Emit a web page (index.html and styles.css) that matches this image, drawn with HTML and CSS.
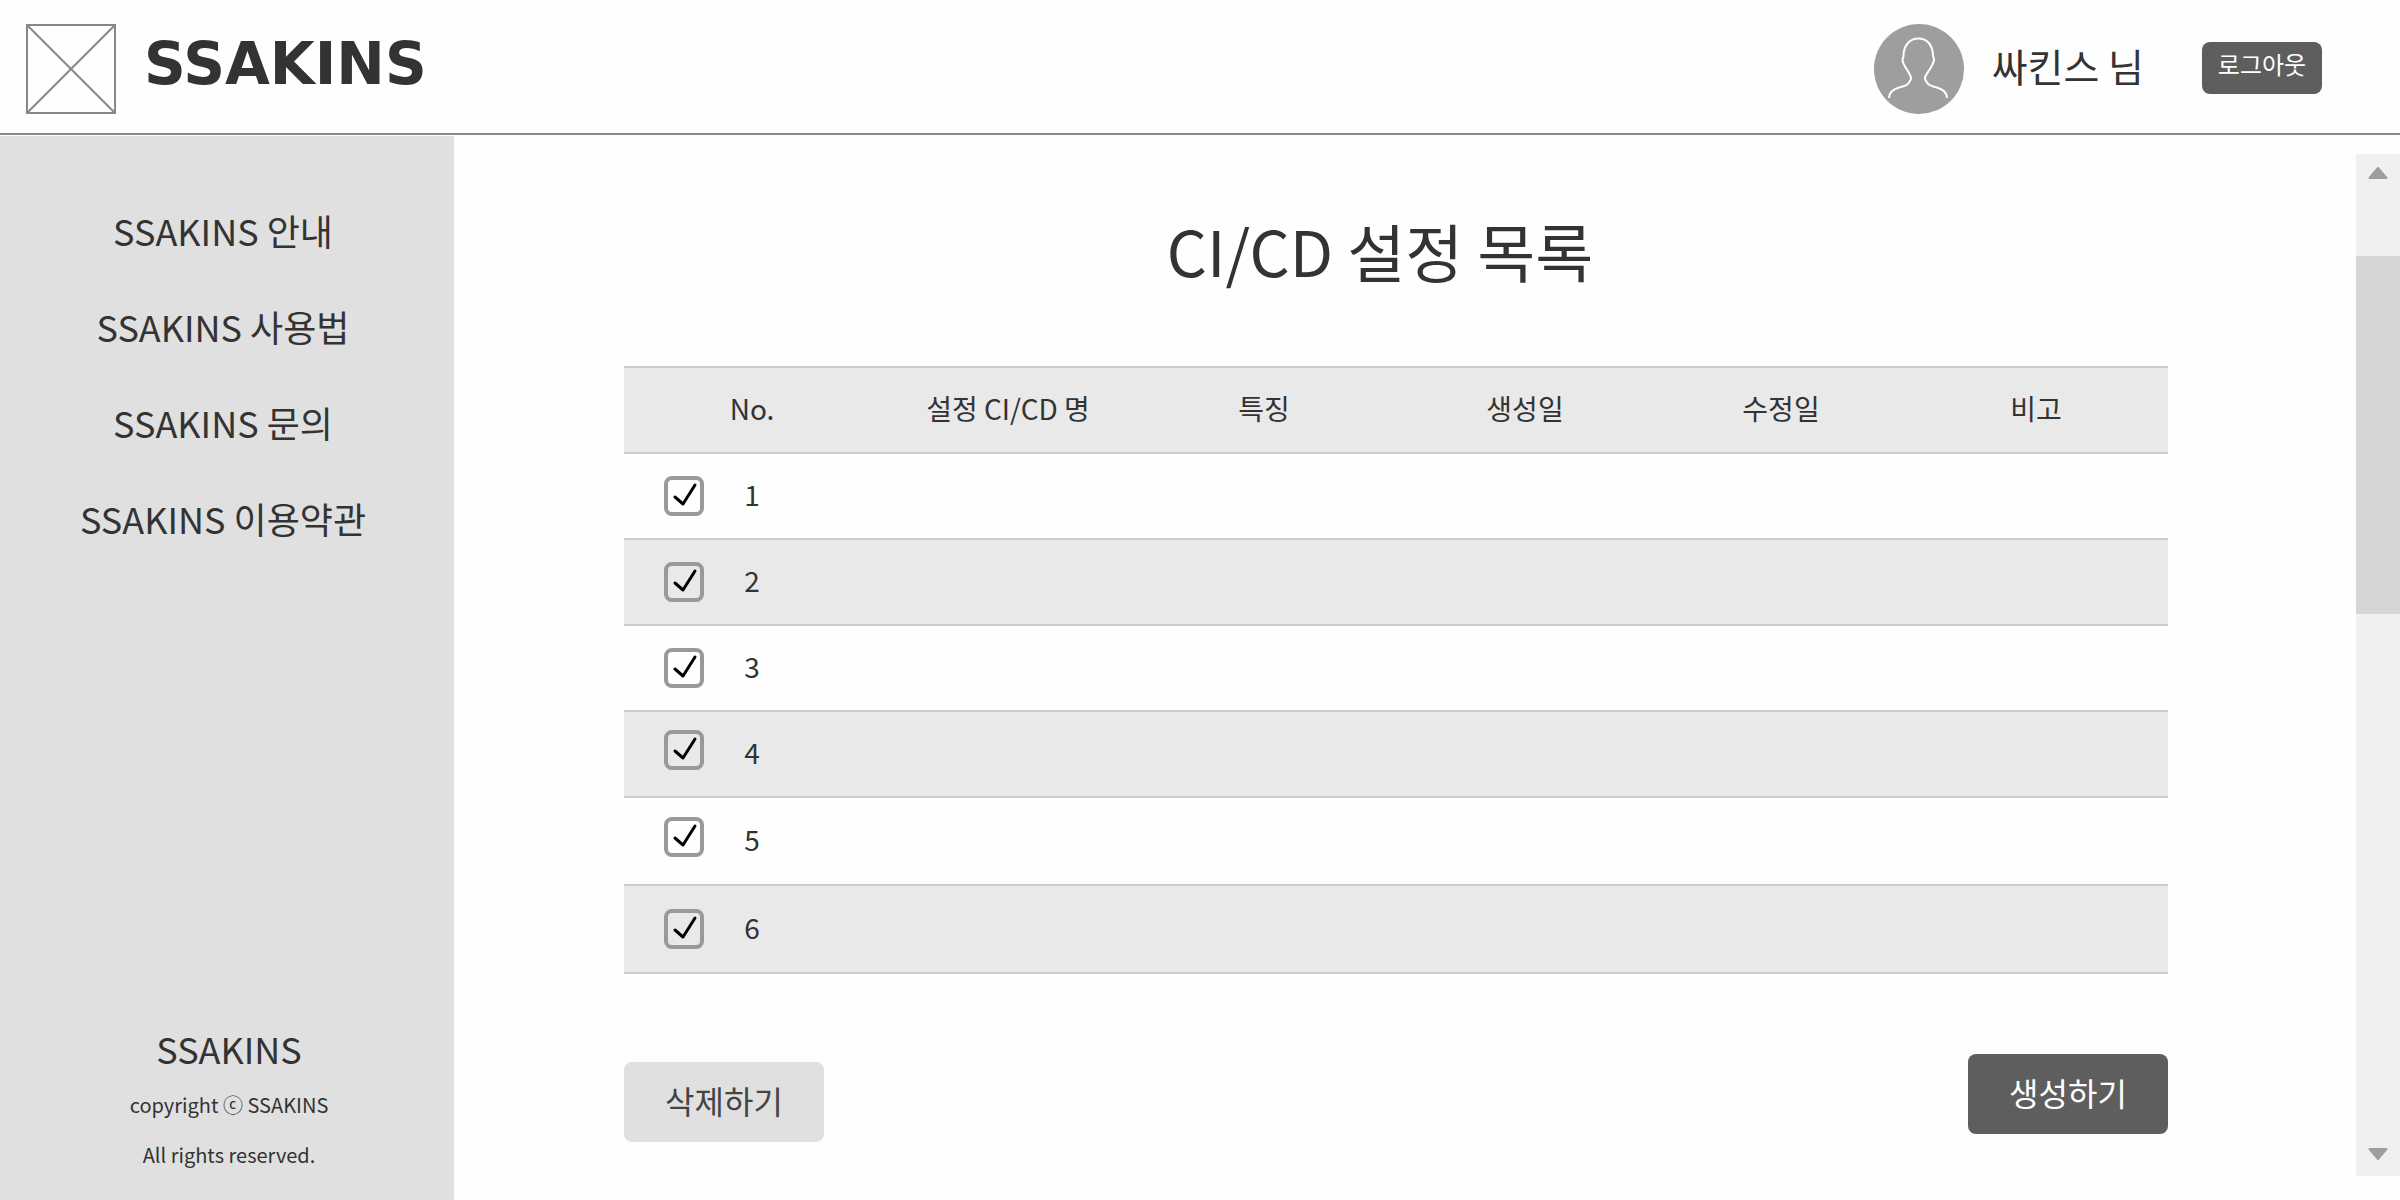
FILE: index.html
```html
<!DOCTYPE html>
<html>
<head>
<meta charset="utf-8">
<meta name="viewport" content="width=device-width, initial-scale=1">
<title>SSAKINS - CI/CD 설정 목록</title>
<link rel="stylesheet" href="styles.css">
</head>
<body>
<header class="topbar">
  <a class="brand" href="#">
    <svg class="brand-mark" viewBox="0 0 90 90" aria-hidden="true"><path d="M1 1H89V89H1ZM1 1L89 89M89 1L1 89"/></svg>
    <span class="brand-name">SSAKINS</span>
  </a>
  <div class="account">
    <svg class="avatar" viewBox="0 0 90 90" aria-hidden="true">
      <circle cx="45" cy="45" r="45"/>
      <path d="M15 74C15 68 20 65 25 63.500C30 62 33 62 35 58.500C36.500 56.500 38 55 36.500 52C33 45 29 41 28.500 36C28.500 34 29.500 34 29.500 31C30 21 36 14.500 44.500 14.500C53 14.500 58.500 21 59 31C59 34 60.500 34 60 36C59 42 55 46 51.500 52C50 55 51.500 56.500 53 58.500C55 62 58 62 63 63.500C68 65 73 68 73 74"/>
    </svg>
    <span class="user-name">싸킨스 님</span>
    <button class="logout" type="button">로그아웃</button>
  </div>
</header>
<div class="layout">
  <aside class="sidebar">
    <nav class="menu">
      <a href="#">SSAKINS 안내</a>
      <a href="#">SSAKINS 사용법</a>
      <a href="#">SSAKINS 문의</a>
      <a href="#">SSAKINS 이용약관</a>
    </nav>
    <footer class="legal">
      <p class="legal-name">SSAKINS</p>
      <p class="legal-line">copyright ⓒ SSAKINS</p>
      <p class="legal-line">All rights reserved.</p>
    </footer>
  </aside>
  <main class="content">
    <h1 class="title">CI/CD 설정 목록</h1>
    <table class="list">
      <colgroup>
        <col class="col-check"><col class="col-no"><col class="col-name"><col class="col-feature"><col class="col-created"><col class="col-updated"><col class="col-note">
      </colgroup>
      <thead>
        <tr><th></th><th class="no">No.</th><th>설정 CI/CD 명</th><th>특징</th><th>생성일</th><th>수정일</th><th>비고</th></tr>
      </thead>
      <tbody>
        <tr><td class="pick"><label class="check"><input type="checkbox" aria-label="1" checked><svg viewBox="0 0 40 40" aria-hidden="true"><path d="M11 21L19 28L31 9"/></svg></label></td><td class="no">1</td><td></td><td></td><td></td><td></td><td></td></tr>
        <tr><td class="pick"><label class="check"><input type="checkbox" aria-label="2" checked><svg viewBox="0 0 40 40" aria-hidden="true"><path d="M11 21L19 28L31 9"/></svg></label></td><td class="no">2</td><td></td><td></td><td></td><td></td><td></td></tr>
        <tr><td class="pick"><label class="check"><input type="checkbox" aria-label="3" checked><svg viewBox="0 0 40 40" aria-hidden="true"><path d="M11 21L19 28L31 9"/></svg></label></td><td class="no">3</td><td></td><td></td><td></td><td></td><td></td></tr>
        <tr><td class="pick pick-high"><label class="check"><input type="checkbox" aria-label="4" checked><svg viewBox="0 0 40 40" aria-hidden="true"><path d="M11 21L19 28L31 9"/></svg></label></td><td class="no">4</td><td></td><td></td><td></td><td></td><td></td></tr>
        <tr class="tall"><td class="pick pick-high"><label class="check"><input type="checkbox" aria-label="5" checked><svg viewBox="0 0 40 40" aria-hidden="true"><path d="M11 21L19 28L31 9"/></svg></label></td><td class="no">5</td><td></td><td></td><td></td><td></td><td></td></tr>
        <tr class="tall"><td class="pick"><label class="check"><input type="checkbox" aria-label="6" checked><svg viewBox="0 0 40 40" aria-hidden="true"><path d="M11 21L19 28L31 9"/></svg></label></td><td class="no">6</td><td></td><td></td><td></td><td></td><td></td></tr>
      </tbody>
    </table>
    <div class="actions">
      <button class="action action-delete" type="button">삭제하기</button>
      <button class="action action-create" type="button">생성하기</button>
    </div>
  </main>
  <div class="scroll">
    <button class="scroll-up" type="button" aria-label="위로"><svg class="arrow" viewBox="0 0 20 14" aria-hidden="true"><path d="M10 2L18.500 12H1.500Z"/></svg></button>
    <div class="scroll-thumb"></div>
    <div class="scroll-rest"></div>
    <button class="scroll-down" type="button" aria-label="아래로"><svg class="arrow" viewBox="0 0 20 14" aria-hidden="true"><path d="M10 12L1.500 2H18.500Z"/></svg></button>
  </div>
</div>
</body>
</html>
```
FILE: styles.css
```css
* { box-sizing: border-box; }

body {
  margin: 0;
  min-height: 100vh;
  display: flex;
  flex-direction: column;
  background: #fefefe;
  color: #333;
  font-family: "Noto Sans CJK KR", sans-serif;
}

a { color: inherit; text-decoration: none; }
p, h1 { margin: 0; font-weight: 400; }
button { border: 0; padding: 0; font-family: inherit; }

/* Top bar */
.topbar {
  display: flex;
  justify-content: space-between;
  align-items: flex-start;
  height: 135px;
  padding: 24px 78px 0 26px;
  border-bottom: 2px solid #888;
}
.brand { display: flex; gap: 28px; }
.brand-mark { width: 90px; height: 90px; fill: none; stroke: #888; stroke-width: 2; }
.brand-name {
  font: 700 58px/80px "DejaVu Sans", sans-serif;
}
.account { display: flex; align-items: center; }
.avatar { width: 90px; height: 90px; }
.avatar circle { fill: #9e9e9e; }
.avatar path { fill: none; stroke: #fff; stroke-width: 2; }
.user-name { margin: 0 58px 8px 28px; font-size: 39px; line-height: 60px; }
.logout {
  width: 120px;
  height: 52px;
  margin-bottom: 2px;
  padding-bottom: 8px;
  border-radius: 8px;
  background: #5e5e5e;
  color: #fff;
  font-size: 24px;
  line-height: 36px;
}

.layout { flex: 1; display: flex; padding-top: 1px; }

/* Sidebar */
.sidebar {
  flex: none;
  width: 454px;
  display: flex;
  flex-direction: column;
  justify-content: space-between;
  padding: 66px 0 20px;
  background: #e0e0e0;
  background-clip: padding-box;
  text-align: center;
}
.menu { display: flex; flex-direction: column; gap: 40px; padding-right: 8px; }
.menu a, .legal-name { font-size: 36px; line-height: 56px; }
.legal { padding-left: 4px; }
.legal-name { margin-bottom: 4px; }
.legal-line { font-size: 20px; line-height: 50px; }

/* Content */
.content { flex: 1; padding: 66px 188px 58px 170px; }
.title {
  margin-bottom: 68px;
  padding-right: 32px;
  font-size: 63px;
  line-height: 96px;
  text-align: center;
}

.list { width: 100%; table-layout: fixed; border-collapse: separate; border-spacing: 0; }
.col-check { width: 80px; }
.col-no { width: 176px; }
.col-name { width: 256px; }
.col-feature { width: 256px; }
.col-created { width: 266px; }
.col-updated { width: 246px; }
.col-note { width: 264px; }
.list th, .list td {
  height: 86px;
  padding: 0 0 4px;
  border-bottom: 2px solid #ccc;
  font-size: 28px;
  font-weight: 400;
  line-height: 40px;
  text-align: center;
}
.list th { height: 88px; border-top: 2px solid #ccc; background: #e9e9e9; }
.list tbody tr:nth-child(even) { background: #e9e9e9; }
.list .tall td { height: 88px; }
.list .no { padding-right: 80px; }
.list .pick { padding: 0 0 0 40px; }
.list .pick-high { padding-bottom: 8px; }

.check { display: grid; width: 40px; height: 40px; }
.check input {
  grid-area: 1 / 1;
  appearance: none;
  width: 40px;
  height: 40px;
  margin: 0;
  border: 4px solid #999;
  border-radius: 8px;
}
.check svg { grid-area: 1 / 1; width: 40px; height: 40px; visibility: hidden; pointer-events: none; }
.check input:checked + svg { visibility: visible; }
.check path { fill: none; stroke: #000; stroke-width: 3; stroke-linecap: round; stroke-linejoin: round; }

.actions { display: flex; justify-content: space-between; height: 88px; margin-top: 80px; }
.action {
  width: 200px;
  height: 80px;
  padding-bottom: 4px;
  border-radius: 8px;
  font-size: 32px;
  line-height: 48px;
}
.action-delete { align-self: flex-end; background: #e0e0e0; color: #444; }
.action-create { background: #5e5e5e; color: #fff; }

/* Scroll track */
.scroll {
  flex: none;
  width: 44px;
  display: flex;
  flex-direction: column;
  margin: 18px 0 24px;
  background: #f0f0f0;
}
.scroll button { display: flex; justify-content: center; background: none; }
.scroll-up { height: 102px; padding-top: 12px; }
.scroll-down { height: 29px; }
.scroll-thumb { flex: 358; background: #d6d6d6; }
.scroll-rest { flex: 533; }
.arrow { width: 20px; height: 14px; fill: #9e9e9e; stroke: #9e9e9e; stroke-width: 2; stroke-linejoin: round; }
```
